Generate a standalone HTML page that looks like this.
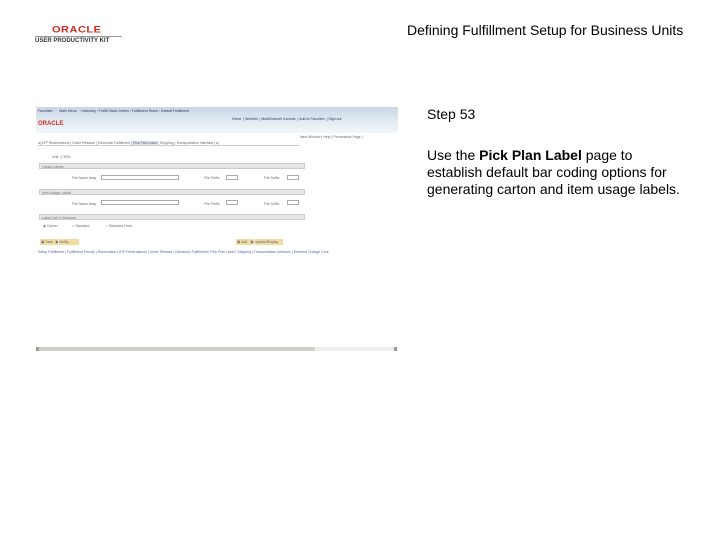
<!DOCTYPE html>
<html><head><style>
body{margin:0;width:720px;height:540px;background:#fff;position:relative;font-family:"Liberation Sans",sans-serif;overflow:hidden}
.a{position:absolute}
.t{font-size:3.5px;color:#667;white-space:nowrap}
.sec{position:absolute;left:39px;width:266px;height:6px;background:#e6e6e6;border:1px solid #ccc;font-size:3.5px;color:#777;line-height:6px;padding-left:2px;box-sizing:border-box}
.in{position:absolute;height:5px;border:1px solid #aab;background:#fff;box-sizing:border-box}
</style></head><body>
<div class="a" style="left:52px;top:24px;font-size:11px;font-weight:bold;color:#d52b1e;letter-spacing:0.5px;transform:scaleY(0.8)">ORACLE</div>
<div class="a" style="left:35px;top:36px;width:87px;height:1px;background:#999"></div>
<div class="a" style="left:35px;top:38px;font-size:6px;font-weight:bold;color:#333;white-space:nowrap">USER PRODUCTIVITY KIT</div>
<div class="a" style="left:407px;top:22px;font-size:14px;color:#000;white-space:nowrap">Defining Fulfillment Setup for Business Units</div>
<div class="a" style="left:427px;top:106px;font-size:14px;color:#000">Step 53</div>
<div class="a" style="left:427px;top:147px;width:256px;font-size:14px;line-height:17px;color:#000">Use the <b>Pick Plan Label</b> page to establish default bar coding options for generating carton and item usage labels.</div>

<div class="a" style="left:36px;top:107px;width:362px;height:26px;background:linear-gradient(#c9d6e6,#e4ecf4 60%,#f3f6fa)"></div>
<div class="a t" style="left:38px;top:109px;color:#335">Favorites · &nbsp; &nbsp; Main Menu &nbsp; › Inventory › Fulfill Stock Orders › Fulfillment Rules › Default Fulfillment</div>
<div class="a t" style="left:232px;top:117px;color:#335">Home &nbsp;| Worklist &nbsp;| MultiChannel Console &nbsp;| Add to Favorites &nbsp;| Sign out</div>
<div class="a" style="left:38px;top:121px;font-size:6px;font-weight:bold;color:#d52b1e">ORACLE</div>
<div class="a t" style="left:300px;top:135px">New Window | Help | Personalize Page |</div>
<div class="a t" style="left:38px;top:141px;border-bottom:1px solid #ccc;width:262px">◂| ATP Reservations | Order Release | Electronic Fulfillment |<span style="background:#dde4ee"> Pick Plan Label </span>| Shipping | Transportation Interface | ▸|</div>
<div class="a t" style="left:52px;top:155px">Unit: 1 3001</div>
<div class="sec" style="top:163px">Carton Labels</div>
<div class="a t" style="left:72px;top:176px">File Name Assy</div><div class="in" style="left:101px;top:175px;width:78px"></div>
<div class="a t" style="left:204px;top:176px">File Prefix</div><div class="in" style="left:226px;top:175px;width:12px"></div>
<div class="a t" style="left:264px;top:176px">File Suffix</div><div class="in" style="left:287px;top:175px;width:12px"></div>
<div class="sec" style="top:189px">Item Usage Labels</div>
<div class="a t" style="left:72px;top:202px">File Name Assy</div><div class="in" style="left:101px;top:200px;width:78px"></div>
<div class="a t" style="left:204px;top:202px">File Prefix</div><div class="in" style="left:226px;top:200px;width:12px"></div>
<div class="a t" style="left:264px;top:202px">File Suffix</div><div class="in" style="left:287px;top:200px;width:12px"></div>
<div class="sec" style="top:214px">Label Unit of Measure</div>
<div class="a t" style="left:43px;top:224px">◉ Carton &nbsp; &nbsp; &nbsp; &nbsp; &nbsp; &nbsp; &nbsp; ○ Standard &nbsp; &nbsp; &nbsp; &nbsp; &nbsp; &nbsp; &nbsp; &nbsp; ○ Standard Pack</div>
<div class="a" style="left:40px;top:239px;width:18px;height:6px;background:#f3dca0"></div>
<div class="a" style="left:59px;top:239px;width:20px;height:6px;background:#f3dca0"></div>
<div class="a t" style="left:41px;top:240px">▣ Save &nbsp;▣ Notify</div>
<div class="a" style="left:236px;top:239px;width:18px;height:6px;background:#f3dca0"></div>
<div class="a" style="left:255px;top:239px;width:28px;height:6px;background:#f3dca0"></div>
<div class="a t" style="left:237px;top:240px">▣ Add &nbsp; ▣ Update/Display</div>
<div class="a t" style="left:38px;top:250px;color:#56a">Setup Fulfillment | Fulfillment Priority | Reservation | ATP Reservations | Order Release | Electronic Fulfillment | Pick Plan Label | Shipping | Transportation Interface | Demand Change Conf</div>
<div class="a" style="left:36px;top:347px;width:362px;height:4px;background:#eee"></div>
<div class="a" style="left:38px;top:347px;width:277px;height:4px;background:#cfcfc9"></div>
<div class="a" style="left:36px;top:347px;width:3px;height:4px;background:#999"></div>
<div class="a" style="left:394px;top:347px;width:3px;height:4px;background:#999"></div>
</body></html>
